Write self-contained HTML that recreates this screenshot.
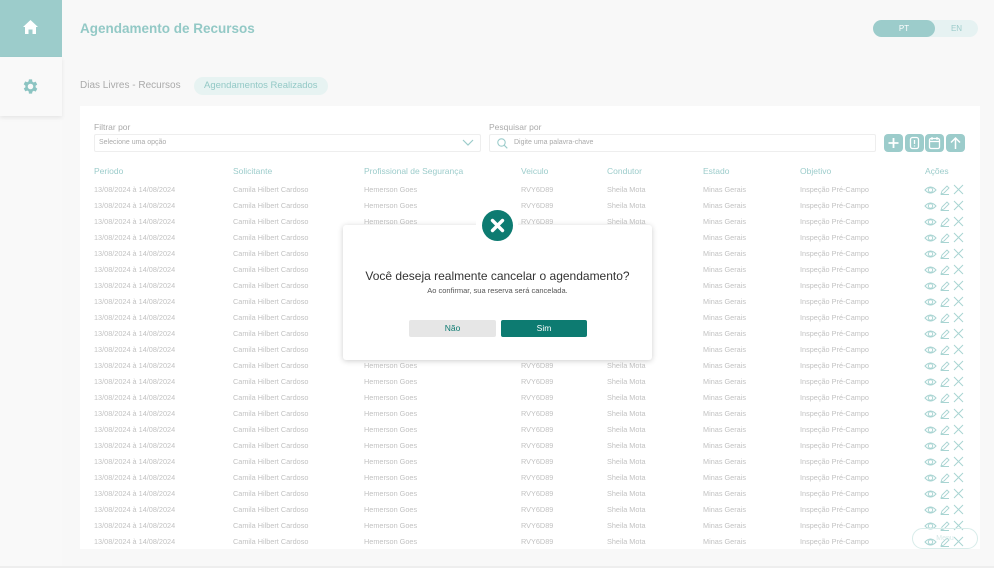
<!DOCTYPE html>
<html><head><meta charset="utf-8"><style>
*{margin:0;padding:0;box-sizing:border-box}
body{width:994px;height:568px;background:#f8f8f8;font-family:"Liberation Sans",sans-serif;position:relative;overflow:hidden}
.abs{position:absolute}
.side1{left:0;top:0;width:62px;height:57px;background:#9ccccb}
.side2{left:0;top:57px;width:62px;height:59px;background:#f9f9f9;box-shadow:0 2px 4px rgba(0,0,0,.08)}
.sidebg{left:0;top:0;width:62px;height:568px;background:#f9f9f9}
.title{left:80px;top:21px;font-size:13.5px;font-weight:bold;color:#93c9c6}
.tog{left:873px;top:20px;width:105px;height:17px;border-radius:9px;background:#e6f2f2}
.tog .pt{position:absolute;left:0;top:0;width:62px;height:17px;border-radius:9px;background:#9ccccb;color:#fff;font-size:8px;text-align:center;line-height:17px}
.tog .en{position:absolute;left:62px;width:43px;top:0;line-height:17px;font-size:8px;color:#9ccccb;text-align:center}
.tab1{left:80px;top:80px;font-size:10px;color:#aaa}
.tab2{left:194px;top:77px;height:18px;padding:0 10px;border-radius:9px;background:#e7f3f2;color:#93c9c6;font-size:9.5px;line-height:18px}
.card{left:80px;top:106px;width:900px;height:443px;background:#fff}
.lbl{font-size:8.5px;color:#aaa}
.inp{border:1px solid #eee;height:18px;border-radius:2px;font-size:7px;color:#aaa;line-height:16px;padding-left:4px}
.btn{top:134px;width:19px;height:18px;border-radius:4px;background:#9ccccb}
.th{top:166px;font-size:8.5px;color:#9ccccb}
.row{position:absolute;left:0;width:994px;height:16px;font-size:7.3px;color:#c2c2c2}
.row span{position:absolute;top:3px;white-space:nowrap}
.row svg{position:absolute;top:1px}
.dlg{left:343px;top:225px;width:309px;height:135px;background:#fff;border-radius:3px;box-shadow:0 1px 6px rgba(0,0,0,.2)}
</style></head><body>
<div class="abs sidebg"></div>
<div class="abs side1"><svg class="abs" style="left:22px;top:19px" width="17" height="16" viewBox="0 0 17 16"><path d="M8.5 1 L16 8 L14 8 L14 15 L10.5 15 L10.5 10.5 L6.5 10.5 L6.5 15 L3 15 L3 8 L1 8 Z" fill="#fff"/></svg></div>
<div class="abs side2"><svg class="abs" style="left:21px;top:20px" width="19" height="19" viewBox="0 0 24 24"><path fill="#8cc4c2" d="M19.4 13a7.5 7.5 0 000-2l2.1-1.6-2-3.5-2.5 1a7 7 0 00-1.7-1L15 3h-4l-.4 2.6a7 7 0 00-1.7 1l-2.5-1-2 3.5L6.6 11a7.5 7.5 0 000 2l-2.1 1.6 2 3.5 2.5-1a7 7 0 001.7 1L11 21h4l.4-2.6a7 7 0 001.7-1l2.5 1 2-3.5zM13 15.5A3.5 3.5 0 1113 8.5a3.5 3.5 0 010 7z" transform="translate(-1 0)"/></svg></div>
<div class="abs title">Agendamento de Recursos</div>
<div class="abs tog"><div class="pt">PT</div><div class="en">EN</div></div>
<div class="abs tab1">Dias Livres - Recursos</div>
<div class="abs tab2">Agendamentos Realizados</div>
<div class="abs card"></div>
<div class="abs lbl" style="left:94px;top:122px">Filtrar por</div>
<div class="abs inp" style="left:94px;top:134px;width:387px">Selecione uma opção<svg class="abs" style="right:6px;top:4px" width="12" height="8" viewBox="0 0 12 8"><path d="M1 1l5 5 5-5" stroke="#9ccccb" fill="none" stroke-width="1.2"/></svg></div>
<div class="abs lbl" style="left:489px;top:122px">Pesquisar por</div>
<div class="abs inp" style="left:489px;top:134px;width:387px;padding-left:24px">Digite uma palavra-chave<svg class="abs" style="left:7px;top:3px" width="11" height="11" viewBox="0 0 11 11"><circle cx="4.5" cy="4.5" r="3.7" stroke="#9ccccb" fill="none" stroke-width="1.1"/><path d="M7.3 7.3l3 3" stroke="#9ccccb" stroke-width="1.1"/></svg></div>
<div class="abs btn" style="left:884px"><svg width="19" height="18"><path d="M9.5 4v10M4.5 9h10" stroke="#fff" stroke-width="1.8"/></svg></div>
<div class="abs btn" style="left:905px"><svg width="19" height="18"><rect x="5.5" y="3.5" width="8" height="11" rx="2" stroke="#fff" fill="none" stroke-width="1.3"/><path d="M9.5 6v4M9.5 11.5v1" stroke="#fff" stroke-width="1.3"/></svg></div>
<div class="abs btn" style="left:925px"><svg width="19" height="18"><rect x="4.5" y="4.5" width="10" height="10" rx="1.5" stroke="#fff" fill="none" stroke-width="1.3"/><path d="M4.5 7.5h10M7 3v3M12 3v3" stroke="#fff" stroke-width="1.2"/></svg></div>
<div class="abs btn" style="left:946px"><svg width="19" height="18"><path d="M9.5 15V4M5 8.5l4.5-4.5 4.5 4.5" stroke="#fff" fill="none" stroke-width="1.5"/></svg></div>
<div class="abs th" style="left:94px">Periodo</div>
<div class="abs th" style="left:233px">Solicitante</div>
<div class="abs th" style="left:364px">Profissional de Segurança</div>
<div class="abs th" style="left:521px">Veiculo</div>
<div class="abs th" style="left:607px">Condutor</div>
<div class="abs th" style="left:703px">Estado</div>
<div class="abs th" style="left:800px">Objetivo</div>
<div class="abs th" style="left:925px">Ações</div>

<svg width="0" height="0" style="position:absolute"><defs>
<g id="ic"><path d="M1 7Q6.5 1 12 7Q6.5 13 1 7Z" stroke="#a8d4d2" fill="none" stroke-width="1"/><circle cx="6.5" cy="7" r="2.2" stroke="#a8d4d2" fill="none" stroke-width="1"/><path d="M17 11l1-3 5-5 2 2-5 5zM17 11.5h8" stroke="#a8d4d2" fill="none" stroke-width=".9"/><path d="M30 2l9 9M39 2l-9 9" stroke="#a8d4d2" stroke-width="1"/></g></defs></svg>

<div class="row" style="top:182px"><span style="left:94px">13/08/2024 à 14/08/2024</span><span style="left:233px">Camila Hilbert Cardoso</span><span style="left:364px">Hemerson Goes</span><span style="left:521px">RVY6D89</span><span style="left:607px">Sheila Mota</span><span style="left:703px">Minas Gerais</span><span style="left:800px">Inspeção Pré-Campo</span><svg style="left:924px" width="42" height="14"><use href="#ic"/></svg></div>
<div class="row" style="top:198px"><span style="left:94px">13/08/2024 à 14/08/2024</span><span style="left:233px">Camila Hilbert Cardoso</span><span style="left:364px">Hemerson Goes</span><span style="left:521px">RVY6D89</span><span style="left:607px">Sheila Mota</span><span style="left:703px">Minas Gerais</span><span style="left:800px">Inspeção Pré-Campo</span><svg style="left:924px" width="42" height="14"><use href="#ic"/></svg></div>
<div class="row" style="top:214px"><span style="left:94px">13/08/2024 à 14/08/2024</span><span style="left:233px">Camila Hilbert Cardoso</span><span style="left:364px">Hemerson Goes</span><span style="left:521px">RVY6D89</span><span style="left:607px">Sheila Mota</span><span style="left:703px">Minas Gerais</span><span style="left:800px">Inspeção Pré-Campo</span><svg style="left:924px" width="42" height="14"><use href="#ic"/></svg></div>
<div class="row" style="top:230px"><span style="left:94px">13/08/2024 à 14/08/2024</span><span style="left:233px">Camila Hilbert Cardoso</span><span style="left:703px">Minas Gerais</span><span style="left:800px">Inspeção Pré-Campo</span><svg style="left:924px" width="42" height="14"><use href="#ic"/></svg></div>
<div class="row" style="top:246px"><span style="left:94px">13/08/2024 à 14/08/2024</span><span style="left:233px">Camila Hilbert Cardoso</span><span style="left:703px">Minas Gerais</span><span style="left:800px">Inspeção Pré-Campo</span><svg style="left:924px" width="42" height="14"><use href="#ic"/></svg></div>
<div class="row" style="top:262px"><span style="left:94px">13/08/2024 à 14/08/2024</span><span style="left:233px">Camila Hilbert Cardoso</span><span style="left:703px">Minas Gerais</span><span style="left:800px">Inspeção Pré-Campo</span><svg style="left:924px" width="42" height="14"><use href="#ic"/></svg></div>
<div class="row" style="top:278px"><span style="left:94px">13/08/2024 à 14/08/2024</span><span style="left:233px">Camila Hilbert Cardoso</span><span style="left:703px">Minas Gerais</span><span style="left:800px">Inspeção Pré-Campo</span><svg style="left:924px" width="42" height="14"><use href="#ic"/></svg></div>
<div class="row" style="top:294px"><span style="left:94px">13/08/2024 à 14/08/2024</span><span style="left:233px">Camila Hilbert Cardoso</span><span style="left:703px">Minas Gerais</span><span style="left:800px">Inspeção Pré-Campo</span><svg style="left:924px" width="42" height="14"><use href="#ic"/></svg></div>
<div class="row" style="top:310px"><span style="left:94px">13/08/2024 à 14/08/2024</span><span style="left:233px">Camila Hilbert Cardoso</span><span style="left:703px">Minas Gerais</span><span style="left:800px">Inspeção Pré-Campo</span><svg style="left:924px" width="42" height="14"><use href="#ic"/></svg></div>
<div class="row" style="top:326px"><span style="left:94px">13/08/2024 à 14/08/2024</span><span style="left:233px">Camila Hilbert Cardoso</span><span style="left:703px">Minas Gerais</span><span style="left:800px">Inspeção Pré-Campo</span><svg style="left:924px" width="42" height="14"><use href="#ic"/></svg></div>
<div class="row" style="top:342px"><span style="left:94px">13/08/2024 à 14/08/2024</span><span style="left:233px">Camila Hilbert Cardoso</span><span style="left:703px">Minas Gerais</span><span style="left:800px">Inspeção Pré-Campo</span><svg style="left:924px" width="42" height="14"><use href="#ic"/></svg></div>
<div class="row" style="top:358px"><span style="left:94px">13/08/2024 à 14/08/2024</span><span style="left:233px">Camila Hilbert Cardoso</span><span style="left:364px">Hemerson Goes</span><span style="left:521px">RVY6D89</span><span style="left:607px">Sheila Mota</span><span style="left:703px">Minas Gerais</span><span style="left:800px">Inspeção Pré-Campo</span><svg style="left:924px" width="42" height="14"><use href="#ic"/></svg></div>
<div class="row" style="top:374px"><span style="left:94px">13/08/2024 à 14/08/2024</span><span style="left:233px">Camila Hilbert Cardoso</span><span style="left:364px">Hemerson Goes</span><span style="left:521px">RVY6D89</span><span style="left:607px">Sheila Mota</span><span style="left:703px">Minas Gerais</span><span style="left:800px">Inspeção Pré-Campo</span><svg style="left:924px" width="42" height="14"><use href="#ic"/></svg></div>
<div class="row" style="top:390px"><span style="left:94px">13/08/2024 à 14/08/2024</span><span style="left:233px">Camila Hilbert Cardoso</span><span style="left:364px">Hemerson Goes</span><span style="left:521px">RVY6D89</span><span style="left:607px">Sheila Mota</span><span style="left:703px">Minas Gerais</span><span style="left:800px">Inspeção Pré-Campo</span><svg style="left:924px" width="42" height="14"><use href="#ic"/></svg></div>
<div class="row" style="top:406px"><span style="left:94px">13/08/2024 à 14/08/2024</span><span style="left:233px">Camila Hilbert Cardoso</span><span style="left:364px">Hemerson Goes</span><span style="left:521px">RVY6D89</span><span style="left:607px">Sheila Mota</span><span style="left:703px">Minas Gerais</span><span style="left:800px">Inspeção Pré-Campo</span><svg style="left:924px" width="42" height="14"><use href="#ic"/></svg></div>
<div class="row" style="top:422px"><span style="left:94px">13/08/2024 à 14/08/2024</span><span style="left:233px">Camila Hilbert Cardoso</span><span style="left:364px">Hemerson Goes</span><span style="left:521px">RVY6D89</span><span style="left:607px">Sheila Mota</span><span style="left:703px">Minas Gerais</span><span style="left:800px">Inspeção Pré-Campo</span><svg style="left:924px" width="42" height="14"><use href="#ic"/></svg></div>
<div class="row" style="top:438px"><span style="left:94px">13/08/2024 à 14/08/2024</span><span style="left:233px">Camila Hilbert Cardoso</span><span style="left:364px">Hemerson Goes</span><span style="left:521px">RVY6D89</span><span style="left:607px">Sheila Mota</span><span style="left:703px">Minas Gerais</span><span style="left:800px">Inspeção Pré-Campo</span><svg style="left:924px" width="42" height="14"><use href="#ic"/></svg></div>
<div class="row" style="top:454px"><span style="left:94px">13/08/2024 à 14/08/2024</span><span style="left:233px">Camila Hilbert Cardoso</span><span style="left:364px">Hemerson Goes</span><span style="left:521px">RVY6D89</span><span style="left:607px">Sheila Mota</span><span style="left:703px">Minas Gerais</span><span style="left:800px">Inspeção Pré-Campo</span><svg style="left:924px" width="42" height="14"><use href="#ic"/></svg></div>
<div class="row" style="top:470px"><span style="left:94px">13/08/2024 à 14/08/2024</span><span style="left:233px">Camila Hilbert Cardoso</span><span style="left:364px">Hemerson Goes</span><span style="left:521px">RVY6D89</span><span style="left:607px">Sheila Mota</span><span style="left:703px">Minas Gerais</span><span style="left:800px">Inspeção Pré-Campo</span><svg style="left:924px" width="42" height="14"><use href="#ic"/></svg></div>
<div class="row" style="top:486px"><span style="left:94px">13/08/2024 à 14/08/2024</span><span style="left:233px">Camila Hilbert Cardoso</span><span style="left:364px">Hemerson Goes</span><span style="left:521px">RVY6D89</span><span style="left:607px">Sheila Mota</span><span style="left:703px">Minas Gerais</span><span style="left:800px">Inspeção Pré-Campo</span><svg style="left:924px" width="42" height="14"><use href="#ic"/></svg></div>
<div class="row" style="top:502px"><span style="left:94px">13/08/2024 à 14/08/2024</span><span style="left:233px">Camila Hilbert Cardoso</span><span style="left:364px">Hemerson Goes</span><span style="left:521px">RVY6D89</span><span style="left:607px">Sheila Mota</span><span style="left:703px">Minas Gerais</span><span style="left:800px">Inspeção Pré-Campo</span><svg style="left:924px" width="42" height="14"><use href="#ic"/></svg></div>
<div class="row" style="top:518px"><span style="left:94px">13/08/2024 à 14/08/2024</span><span style="left:233px">Camila Hilbert Cardoso</span><span style="left:364px">Hemerson Goes</span><span style="left:521px">RVY6D89</span><span style="left:607px">Sheila Mota</span><span style="left:703px">Minas Gerais</span><span style="left:800px">Inspeção Pré-Campo</span><svg style="left:924px" width="42" height="14"><use href="#ic"/></svg></div>
<div class="row" style="top:534px;height:15px;overflow:hidden"><span style="left:94px">13/08/2024 à 14/08/2024</span><span style="left:233px">Camila Hilbert Cardoso</span><span style="left:364px">Hemerson Goes</span><span style="left:521px">RVY6D89</span><span style="left:607px">Sheila Mota</span><span style="left:703px">Minas Gerais</span><span style="left:800px">Inspeção Pré-Campo</span><svg style="left:924px" width="42" height="14"><use href="#ic"/></svg></div>

<div class="abs" style="left:912px;top:528px;width:66px;height:21px;border:1px solid #d8ecea;border-radius:11px;font-size:7px;color:#d5e8e7;text-align:center;line-height:19px">Menu</div>
<div class="abs" style="left:0;top:566px;width:994px;height:2px;background:#eee"></div>

<div class="abs dlg">
<div style="position:absolute;top:44px;width:100%;text-align:center;font-size:12px;color:#333">Você deseja realmente cancelar o agendamento?</div>
<div style="position:absolute;top:61px;width:100%;text-align:center;font-size:7.5px;color:#555">Ao confirmar, sua reserva será cancelada.</div>
<div style="position:absolute;left:66px;top:95px;width:87px;height:17px;background:#e6e6e6;border-radius:2px;color:#0e7b72;font-size:8.5px;text-align:center;line-height:17px">Não</div>
<div style="position:absolute;left:158px;top:95px;width:86px;height:17px;background:#0d7b71;border-radius:2px;color:#fff;font-size:8.5px;text-align:center;line-height:17px">Sim</div>
</div>
<div class="abs" style="left:476px;top:215px;width:42px;height:16px;background:#fff"></div>
<div class="abs" style="left:482px;top:210px;width:31px;height:31px;border-radius:50%;background:#0d7b71"><svg width="31" height="31"><path d="M10.5 10.5l10 10M20.5 10.5l-10 10" stroke="#fff" stroke-width="3.4" stroke-linecap="round"/></svg></div>
</body></html>
